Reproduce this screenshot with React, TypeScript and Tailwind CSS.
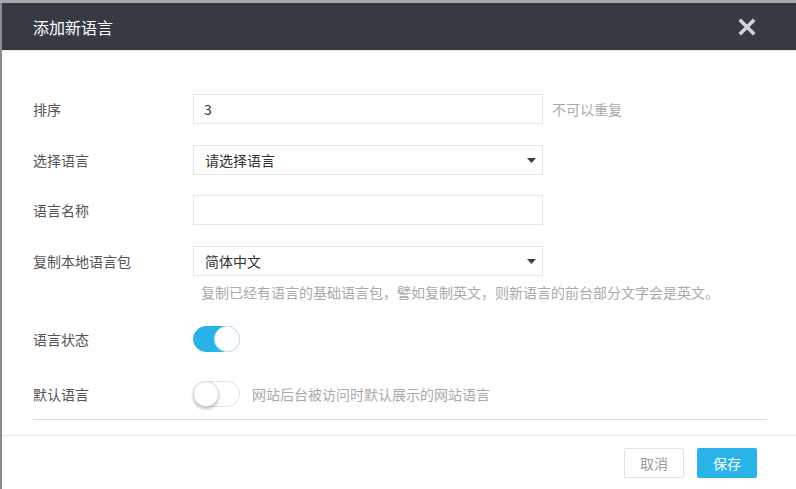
import { useState } from "react";

const font = { fontFamily: '"Noto Sans CJK SC", "Noto Sans", sans-serif' };

function Caret() {
  return (
    <svg width="9" height="5" viewBox="0 0 9 5" className="shrink-0">
      <path d="M0 0 H9 L4.5 5 Z" fill="#3c3f45" />
    </svg>
  );
}

function Toggle({ on, onClick }: { on: boolean; onClick: () => void }) {
  return (
    <button
      onClick={onClick}
      className={
        "relative h-[26px] w-[47px] shrink-0 rounded-full border " +
        (on ? "border-[#29b2e7] bg-[#29b2e7]" : "border-[#e3e3e3] bg-white")
      }
    >
      <span
        className={
          "absolute top-[-1px] h-[26px] w-[26px] rounded-full border bg-white " +
          (on
            ? "right-[-1px] border-[#d9eef7]"
            : "left-[-1px] border-[#dcdcdc] shadow-[0_2px_3px_rgba(0,0,0,0.25)]")
        }
      />
    </button>
  );
}

function Row({ label, children, className = "" }: { label: string; children: React.ReactNode; className?: string }) {
  return (
    <div className={"flex items-center " + className}>
      <div className="w-[160px] shrink-0 text-[14px] text-[#555]">{label}</div>
      {children}
    </div>
  );
}

export default function App() {
  const [status, setStatus] = useState(true);
  const [def, setDef] = useState(false);

  return (
    <div className="h-[489px] w-[796px] overflow-hidden bg-[#a8a8a8]" style={font}>
      <div className="mt-[3px] flex h-[486px] flex-col border-l-2 border-[#8c8c8c] bg-white">
        {/* Header */}
        <div className="flex h-[48px] shrink-0 items-center justify-between border-b border-[#e6e8ec] bg-[#363a42] pl-[31px] pr-[40px]">
          <span className="text-[16px] text-white">添加新语言</span>
          <svg width="18" height="18" viewBox="0 0 18 18">
            <path d="M3 3 L15 15 M15 3 L3 15" stroke="#d2d3d5" strokeWidth="3.6" strokeLinecap="square" />
          </svg>
        </div>

        {/* Body */}
        <div className="flex-1 px-[31px] pt-[43px]">
          <Row label="排序">
            <div className="flex h-[30px] w-[350px] items-center border border-[#e6e6e6] px-[10px] text-[14px] text-[#333]">3</div>
            <span className="ml-[9px] text-[14px] text-[#aaa]">不可以重复</span>
          </Row>
          <Row label="选择语言" className="mt-[21px]">
            <div className="flex h-[30px] w-[350px] items-center justify-between border border-[#e6e6e6] pl-[11px] pr-[6px] text-[14px] text-[#333]">
              <span>请选择语言</span>
              <Caret />
            </div>
          </Row>
          <Row label="语言名称" className="mt-[20px]">
            <div className="h-[30px] w-[350px] border border-[#e6e6e6]" />
          </Row>
          <Row label="复制本地语言包" className="mt-[21px]">
            <div className="flex h-[30px] w-[350px] items-center justify-between border border-[#e6e6e6] pl-[11px] pr-[6px] text-[14px] text-[#333]">
              <span>简体中文</span>
              <Caret />
            </div>
          </Row>
          <div className="ml-[168px] mt-[6px] text-[14px] leading-[20px] text-[#aaa]">
            复制已经有语言的基础语言包，譬如复制英文，则新语言的前台部分文字会是英文。
          </div>
          <Row label="语言状态" className="mt-[24px]">
            <Toggle on={status} onClick={() => setStatus(!status)} />
          </Row>
          <Row label="默认语言" className="mt-[29px]">
            <Toggle on={def} onClick={() => setDef(!def)} />
            <span className="ml-[12px] text-[14px] text-[#aaa]">网站后台被访问时默认展示的网站语言</span>
          </Row>
          <div className="mt-[12px] h-px w-[734px] bg-[#dedede]" />
        </div>

        {/* Footer */}
        <div className="flex h-[54px] shrink-0 items-start justify-end gap-[13px] border-t border-[#e8e8e8] pr-[39px] pt-[12px]">
          <button className="h-[30px] w-[60px] rounded-[2px] border border-[#e3e3e3] bg-white text-[14px] text-[#999]">取消</button>
          <button className="h-[30px] w-[60px] rounded-[2px] bg-[#29b3e8] text-[14px] text-white">保存</button>
        </div>
      </div>
    </div>
  );
}
